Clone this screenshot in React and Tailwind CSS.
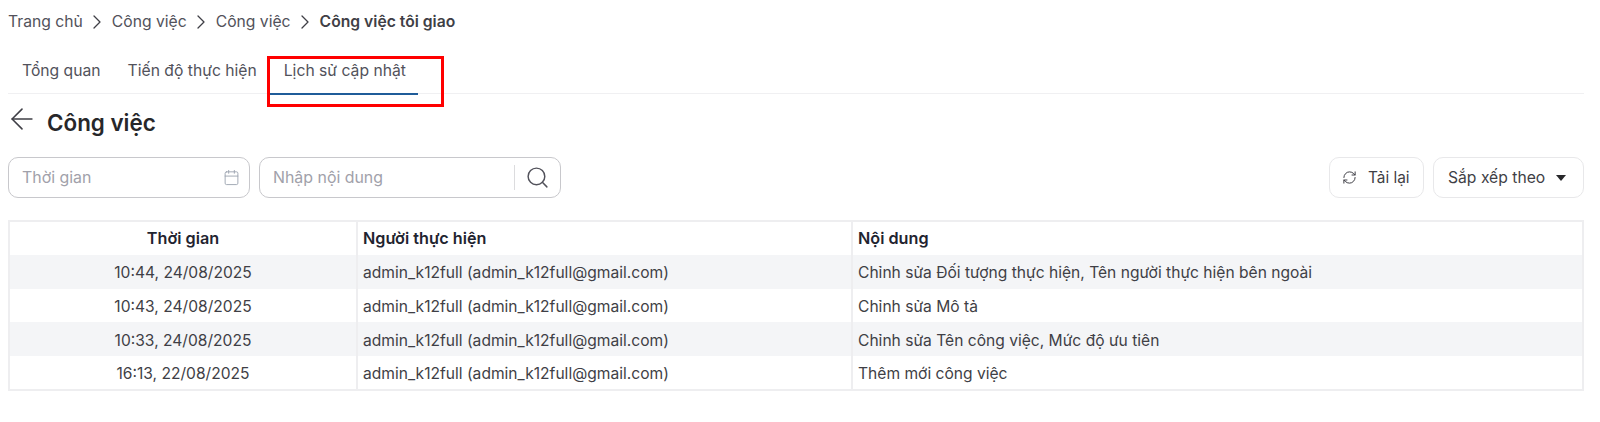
import { ArrowLeft, Calendar, ChevronRight, RefreshCw, Search } from 'lucide-react';

const crumbs = ['Trang chủ', 'Công việc', 'Công việc'];

const rows = [
    { time: '10:44, 24/08/2025', content: 'Chỉnh sửa Đối tượng thực hiện, Tên người thực hiện bên ngoài' },
    { time: '10:43, 24/08/2025', content: 'Chỉnh sửa Mô tả' },
    { time: '10:33, 24/08/2025', content: 'Chỉnh sửa Tên công việc, Mức độ ưu tiên' },
    { time: '16:13, 22/08/2025', content: 'Thêm mới công việc' },
];

const App = () => {
    return (
        <div className="w-[1600px] h-[422px] overflow-hidden bg-white pl-2 pr-4 font-['Inter',sans-serif] text-[#3f3f46]">
            {/* Breadcrumb */}
            <div className="flex items-center h-[44px] text-[15.7px]">
                {crumbs.map((c, i) => (
                    <div key={i} className="flex items-center">
                        <span className="text-[#52525b]">{c}</span>
                        <ChevronRight size={24} strokeWidth={1.3} className="mx-[2.5px] text-[#3f3f46]" />
                    </div>
                ))}
                <span className="font-semibold text-[#3f3f46]">Công việc tôi giao</span>
            </div>

            {/* Tabs */}
            <div className="flex h-[50px] border-b border-[#f0f0f2] text-[15.7px] text-[#52525b]">
                <div className="pl-[14px] pr-[14px] pt-[15px]">Tổng quan</div>
                <div className="pl-[13px] pr-[14px] pt-[15px]">Tiến độ thực hiện</div>
                <div className="relative -ml-[1px] w-[148px] h-[51px] pl-[14px] pt-[15px] border-b-2 border-[#1f5c99]">
                    Lịch sử cập nhật
                    <div className="absolute -left-[3px] top-[12px] w-[177px] h-[51px] border-[3px] border-[#ff0000]" />
                </div>
            </div>

            {/* Title */}
            <div className="flex items-center h-[63px] pb-[6px]">
                <ArrowLeft size={34} strokeWidth={1.1} className="-ml-[3px] mb-[7px] text-[#3f3f46]" />
                <h1 className="ml-[8px] text-[22.4px] font-semibold text-[#27272a]">Công việc</h1>
            </div>

            {/* Filters */}
            <div className="flex items-center justify-between h-[41px]">
                <div className="flex gap-[9px] text-[15.9px] text-[#a1a1aa]">
                    <div className="flex items-center justify-between w-[242px] h-[41px] rounded-[10px] border border-[#c8c8cc] pl-[13px] pr-[9px]">
                        <span>Thời gian</span>
                        <Calendar size={17} strokeWidth={1.3} className="text-[#9ca3af]" />
                    </div>
                    <div className="flex items-center w-[302px] h-[41px] rounded-[10px] border border-[#c8c8cc] pl-[13px]">
                        <span className="flex-1">Nhập nội dung</span>
                        <div className="flex items-center justify-center w-[46px] h-[25px] border-l border-[#dcdcde]">
                            <Search size={25} strokeWidth={1.4} className="text-[#52525b]" />
                        </div>
                    </div>
                </div>
                <div className="flex gap-[9px] text-[15.4px] text-[#3f3f46]">
                    <div className="flex items-center w-[95px] h-[41px] rounded-[10px] border border-[#e8e8ea] pl-[13px]">
                        <RefreshCw size={15} strokeWidth={1.6} className="-ml-[1px]" />
                        <span className="ml-[11px]">Tải lại</span>
                    </div>
                    <div className="flex items-center w-[151px] h-[41px] rounded-[10px] border border-[#e8e8ea] pl-[14px]">
                        <span className="text-[15.7px]">Sắp xếp theo</span>
                        <svg width="10" height="6" viewBox="0 0 10 6" className="ml-[11px]">
                            <path d="M0 0h10L5 6z" fill="#27272a" />
                        </svg>
                    </div>
                </div>
            </div>

            {/* Table */}
            <table className="mt-[22px] w-[1576px] table-fixed border-collapse border-2 border-[#eeeef0] text-[15.6px]">
                <thead>
                    <tr className="h-[34px] text-[16.2px] text-[#1f2430]">
                        <th className="w-[348px] font-semibold text-center">Thời gian</th>
                        <th className="w-[495px] border-l-2 border-[#eeeef0] px-[5px] font-semibold text-left">Người thực hiện</th>
                        <th className="border-l-2 border-[#eeeef0] px-[5px] font-semibold text-left">Nội dung</th>
                    </tr>
                </thead>
                <tbody>
                    {rows.map((r, i) => (
                        <tr key={i} className="h-[33.7px] even:bg-white odd:bg-[#f4f5f7]">
                            <td className="pt-[2px] text-center">{r.time}</td>
                            <td className="border-l-2 border-[#eeeef0] px-[5px] pt-[2px]">admin_k12full (admin_k12full@gmail.com)</td>
                            <td className="border-l-2 border-[#eeeef0] px-[5px] pt-[2px]">{r.content}</td>
                        </tr>
                    ))}
                </tbody>
            </table>
        </div>
    );
};

export default App;
